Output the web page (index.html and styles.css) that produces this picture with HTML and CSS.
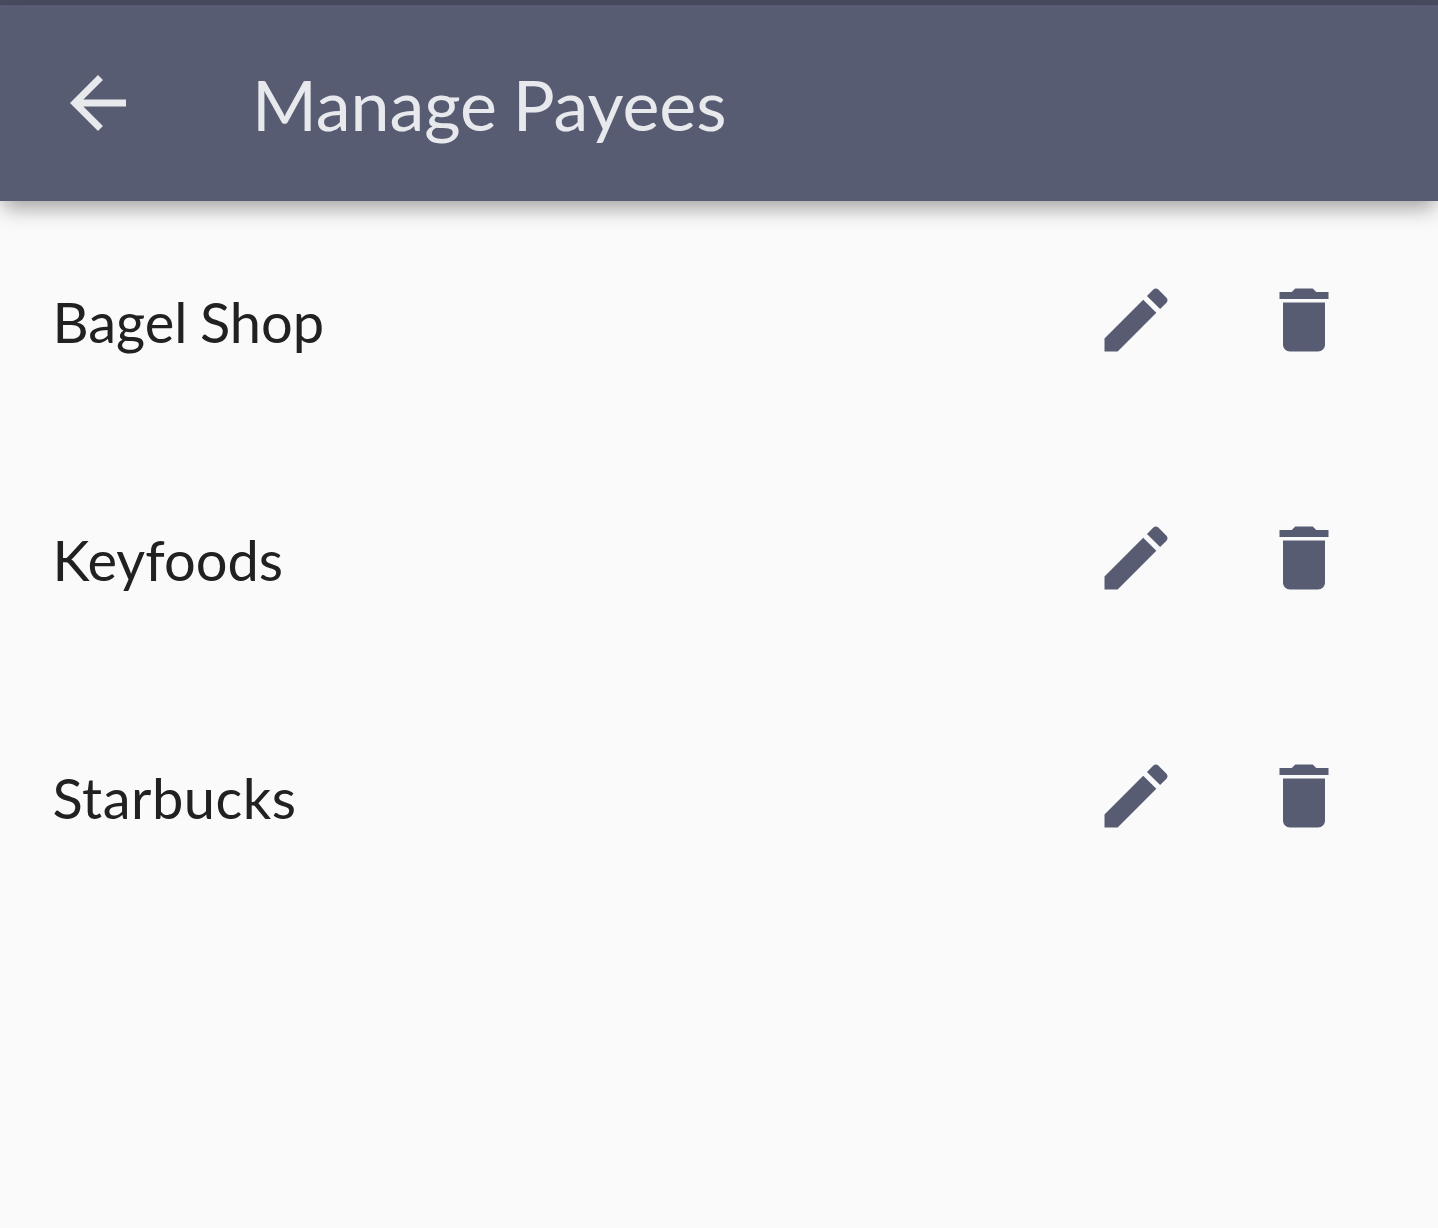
FILE: index.html
```html
<!DOCTYPE html>
<html lang="en">
<head>
<meta charset="utf-8">
<title>Manage Payees</title>
<link rel="stylesheet" href="styles.css">
</head>
<body>
<div class="status-bar"></div>
<header class="app-bar">
  <svg class="icon back" viewBox="0 0 24 24"><path d="M20 11H7.83l5.59-5.59L12 4l-8 8 8 8 1.41-1.41L7.83 13H20v-2z"/></svg>
  <h1 class="title">Manage Payees</h1>
</header>
<main class="list">
  <div class="row">
    <span class="name">Bagel Shop</span>
    <div class="actions">
      <svg class="icon" viewBox="0 0 24 24"><path d="M3 17.25V21h3.75L17.81 9.94l-3.75-3.75L3 17.25zM20.71 7.04c.39-.39.39-1.02 0-1.41l-2.34-2.34c-.39-.39-1.02-.39-1.41 0l-1.83 1.83 3.75 3.75 1.83-1.83z"/></svg>
      <svg class="icon" viewBox="0 0 24 24"><path d="M6 19c0 1.1.9 2 2 2h8c1.1 0 2-.9 2-2V7H6v12zM19 4h-3.5l-1-1h-5l-1 1H5v2h14V4z"/></svg>
    </div>
  </div>
  <div class="row">
    <span class="name">Keyfoods</span>
    <div class="actions">
      <svg class="icon" viewBox="0 0 24 24"><path d="M3 17.25V21h3.75L17.81 9.94l-3.75-3.75L3 17.25zM20.71 7.04c.39-.39.39-1.02 0-1.41l-2.34-2.34c-.39-.39-1.02-.39-1.41 0l-1.83 1.83 3.75 3.75 1.83-1.83z"/></svg>
      <svg class="icon" viewBox="0 0 24 24"><path d="M6 19c0 1.1.9 2 2 2h8c1.1 0 2-.9 2-2V7H6v12zM19 4h-3.5l-1-1h-5l-1 1H5v2h14V4z"/></svg>
    </div>
  </div>
  <div class="row">
    <span class="name name-wide">Starbucks</span>
    <div class="actions">
      <svg class="icon" viewBox="0 0 24 24"><path d="M3 17.25V21h3.75L17.81 9.94l-3.75-3.75L3 17.25zM20.71 7.04c.39-.39.39-1.02 0-1.41l-2.34-2.34c-.39-.39-1.02-.39-1.41 0l-1.83 1.83 3.75 3.75 1.83-1.83z"/></svg>
      <svg class="icon" viewBox="0 0 24 24"><path d="M6 19c0 1.1.9 2 2 2h8c1.1 0 2-.9 2-2V7H6v12zM19 4h-3.5l-1-1h-5l-1 1H5v2h14V4z"/></svg>
    </div>
  </div>
</main>
</body>
</html>
```
FILE: styles.css
```css
html, body {
  margin: 0;
  padding: 0;
}
body {
  width: 1438px;
  height: 1228px;
  overflow: hidden;
  background: #fafafa;
  font-family: Lato, "Open Sans", sans-serif;
  word-spacing: -2px;
}
.status-bar {
  height: 5px;
  background: #484b5e;
}
.app-bar {
  position: relative;
  height: 196px;
  display: flex;
  align-items: center;
  padding-left: 56px;
  background: #585c73;
  box-shadow: 0 10px 20px -3px rgba(0, 0, 0, 0.36);
  box-sizing: border-box;
}
.icon {
  width: 84px;
  height: 84px;
  flex: none;
  display: block;
  fill: #585c73;
}
.back {
  fill: #e8e9ed;
}
.title {
  margin: 0 0 -2px 112px;
  font-size: 70px;
  font-weight: 400;
  letter-spacing: -0.08px;
  color: #e8e9ed;
  line-height: 84px;
}
.row {
  height: 238px;
  display: flex;
  align-items: center;
  justify-content: space-between;
  padding-left: 52.5px;
  padding-right: 92.5px;
}
.name {
  font-size: 56px;
  line-height: 68px;
  color: #212121;
  margin-top: 3px;
}
.name-wide {
  letter-spacing: 0.5px;
}
.actions {
  display: flex;
  gap: 84px;
}
```
